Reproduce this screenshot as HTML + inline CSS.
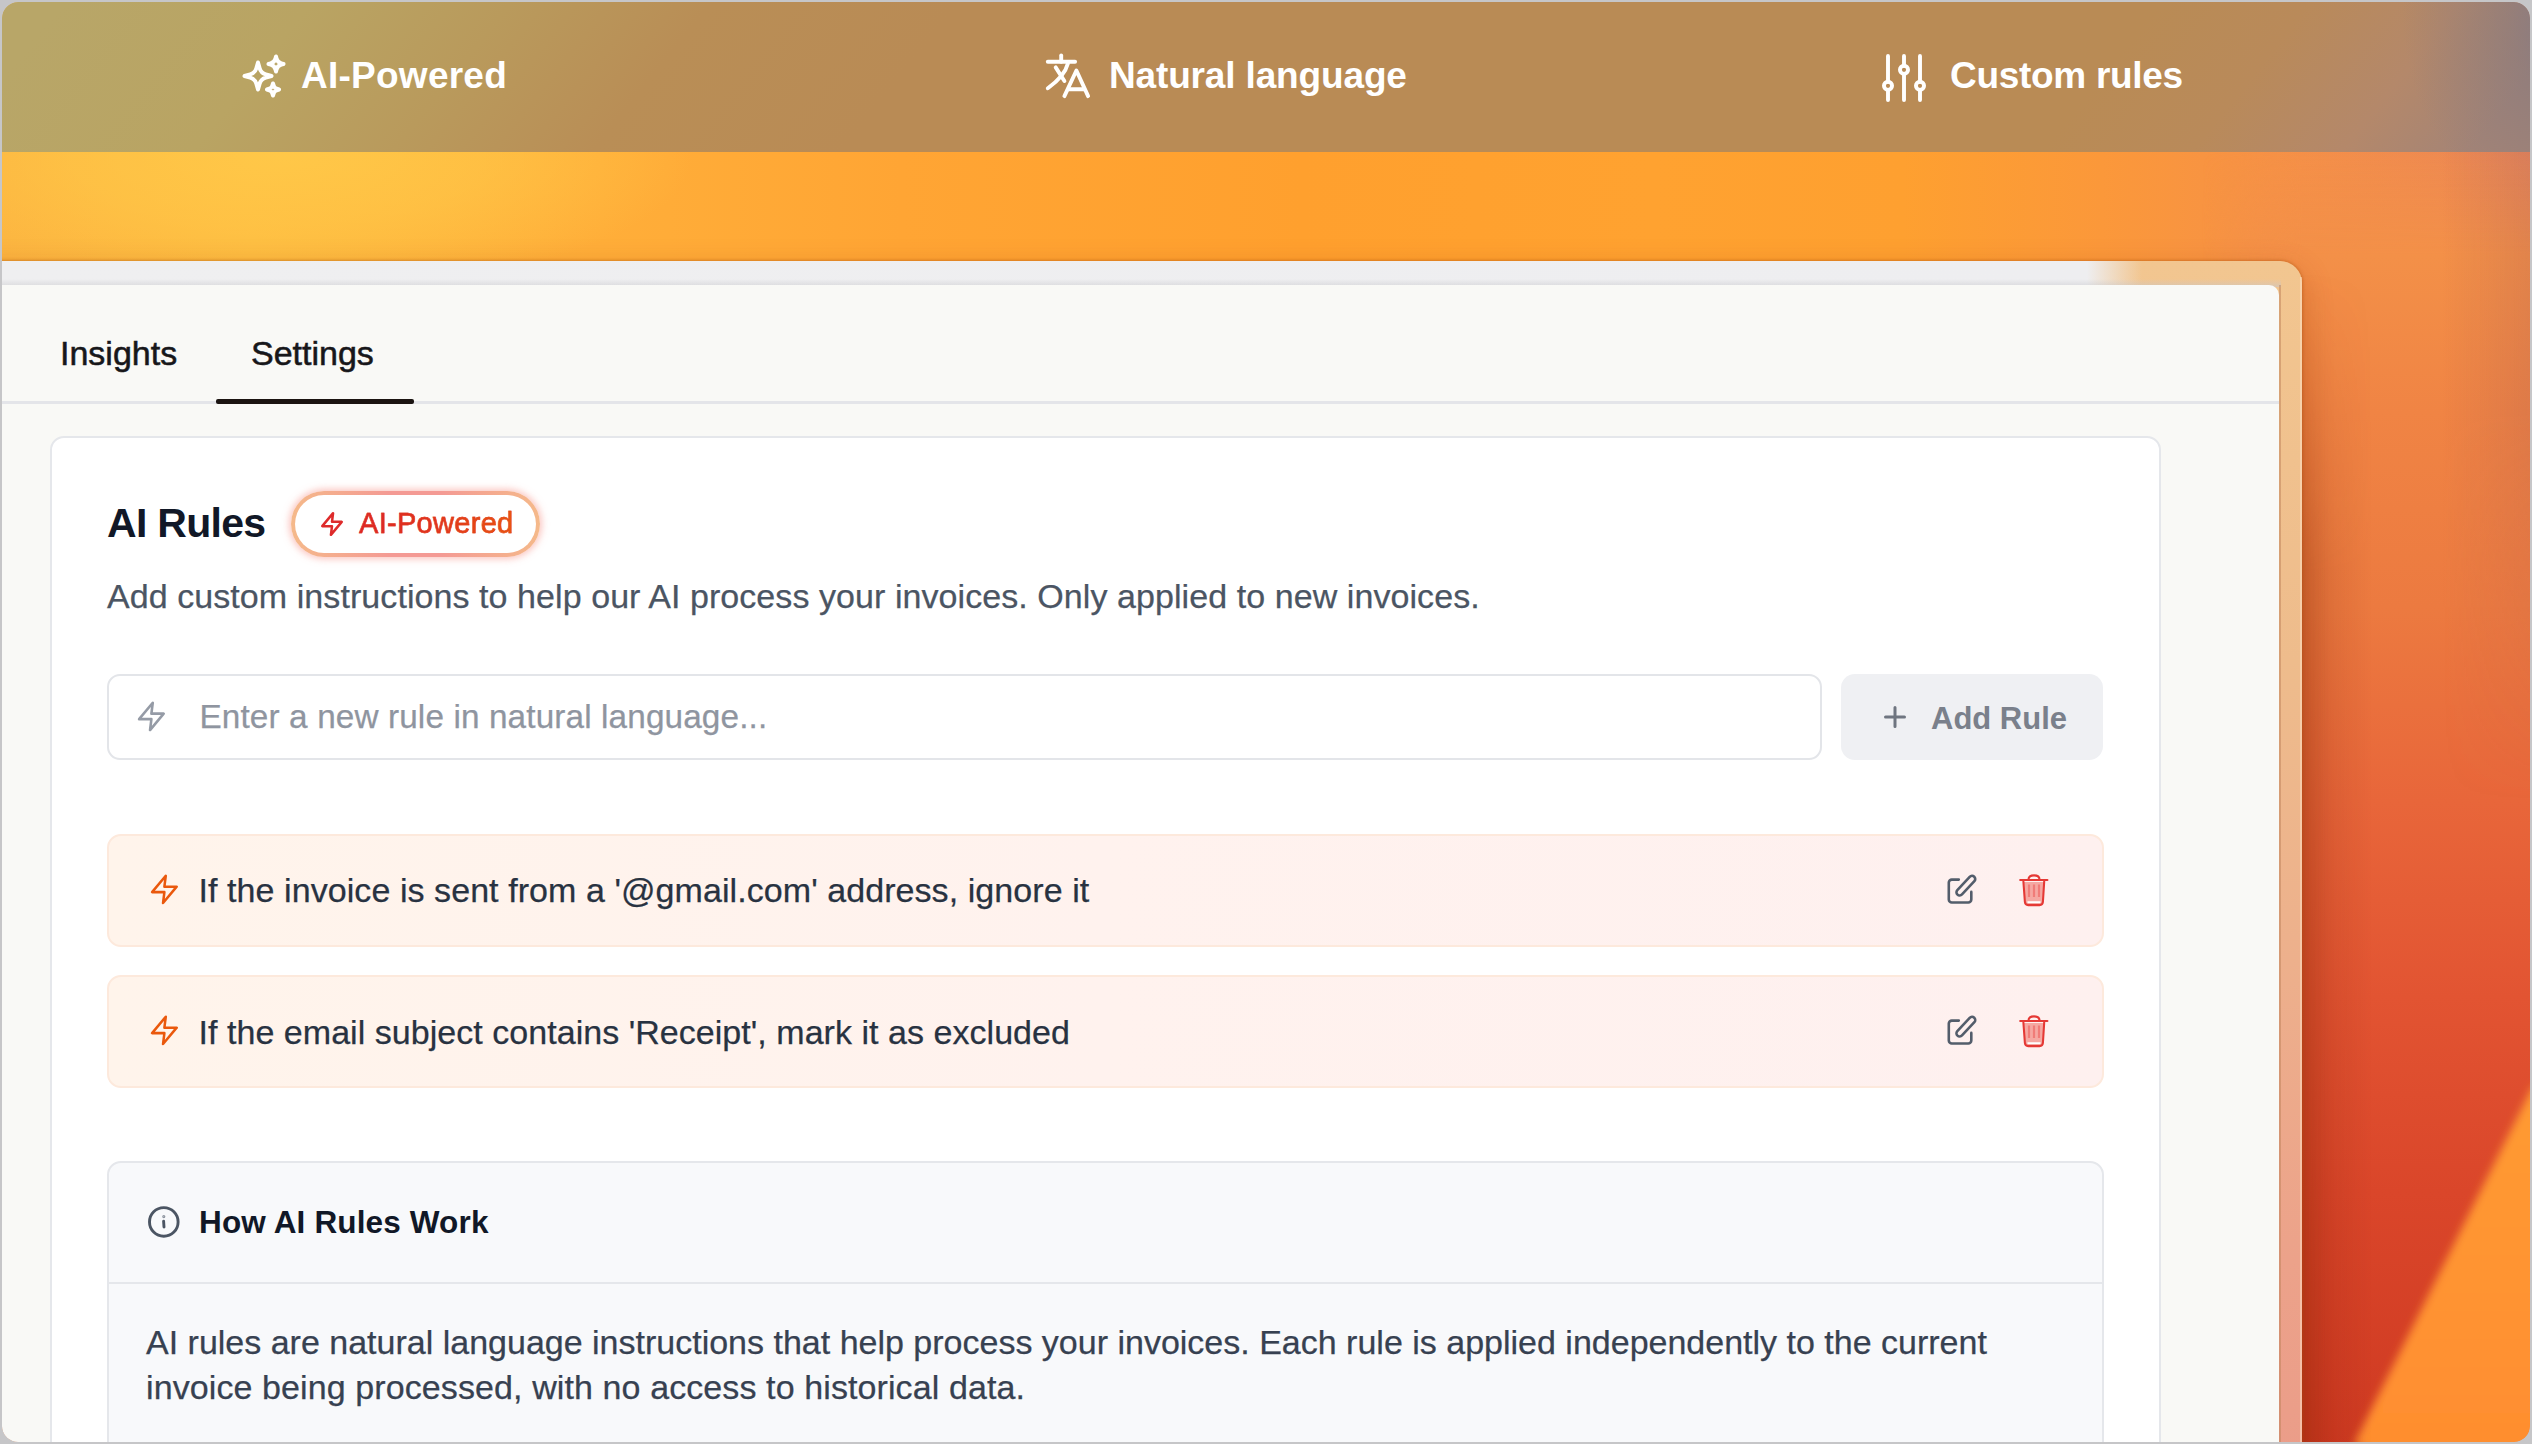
<!DOCTYPE html>
<html>
<head>
<meta charset="utf-8">
<style>
html,body{margin:0;padding:0;}
body{width:2532px;height:1444px;overflow:hidden;background:#c6c6c8;position:relative;font-family:"Liberation Sans",sans-serif;}
.abs{position:absolute;}
#shell{position:absolute;left:2px;top:2px;width:2528px;height:1440px;border-radius:16px;overflow:hidden;
  background:linear-gradient(90deg,#fcb440 0px,#feb93f 250px,#ffae39 600px,#ffa534 900px,#ffa02e 1300px,#ffa230 1650px,#fea030 1900px,#fb983a 2100px,#f59048 2300px,#ee8a52 2450px,#e98a5c 2528px);}
#blob{left:-130px;top:20px;width:820px;height:270px;background:radial-gradient(closest-side,rgba(255,200,72,.95),rgba(255,200,72,.6) 50%,rgba(255,200,72,0));}
#rightbg{left:2250px;top:150px;width:290px;height:1300px;
  background:linear-gradient(180deg,rgba(243,144,72,0) 0px,#f39048 110px,#f08444 260px,#ec7a40 420px,#e8693a 600px,#e3563330 0px);}
#topbar{left:0;top:0;width:2528px;height:150px;
  background:linear-gradient(128.7deg,#b8a668 47px,#b9a463 242px,#b99a5c 398px,#b98e56 554px,#b98b55 749px,#b98b55 1685px,#b98a5a 1802px,#b4886a 1919px,#a48476 2019px);}
.tbt{position:absolute;color:#fff;font-weight:700;font-size:37px;line-height:37px;white-space:nowrap;letter-spacing:-0.3px;}
.t{position:absolute;white-space:nowrap;}
</style>
</head>
<body>
<div id="shell">
  <!-- background field -->
  <div class="abs" id="blob"></div>
  <svg class="abs" style="left:2200px;top:150px;-webkit-mask-image:linear-gradient(90deg,transparent 0,#000 100px);mask-image:linear-gradient(90deg,transparent 0,#000 100px);" width="340" height="1300" viewBox="0 0 340 1300">
    <defs>
      <linearGradient id="rg" x1="0" y1="0" x2="0" y2="1">
        <stop offset="0" stop-color="#f39048" stop-opacity="0"/>
        <stop offset="0.08" stop-color="#f39048"/>
        <stop offset="0.2" stop-color="#f08444"/>
        <stop offset="0.35" stop-color="#ec7a40"/>
        <stop offset="0.5" stop-color="#e8663a"/>
        <stop offset="0.65" stop-color="#e25432"/>
        <stop offset="0.8" stop-color="#da462a"/>
        <stop offset="1" stop-color="#cf3a22"/>
      </linearGradient>
      <linearGradient id="wg" x1="0" y1="0" x2="0" y2="1">
        <stop offset="0" stop-color="#ff9c34"/>
        <stop offset="1" stop-color="#ff8a2e"/>
      </linearGradient>
      <filter id="blur4" x="-20%" y="-20%" width="140%" height="140%"><feGaussianBlur stdDeviation="4"/></filter>
    </defs>
    <rect x="0" y="0" width="340" height="1300" fill="url(#rg)"/>
    <polygon points="330,936 152,1292 400,1400 400,900" fill="url(#wg)" filter="url(#blur4)"/>
  </svg>
  <div class="abs" style="left:2440px;top:150px;width:100px;height:650px;background:linear-gradient(90deg,rgba(150,80,90,0) 0,rgba(150,80,90,.22) 100%);-webkit-mask-image:linear-gradient(180deg,#000 0,#000 40%,transparent 100%);mask-image:linear-gradient(180deg,#000 0,#000 40%,transparent 100%);"></div>
  <div class="abs" id="topbar"></div>
  <div class="abs" style="left:2050px;top:-200px;width:700px;height:420px;background:radial-gradient(closest-side at 75% 50%,rgba(120,118,138,.75) 0%,rgba(125,118,130,.45) 40%,rgba(140,120,120,0) 100%);clip-path:inset(200px 0 70px 0);"></div>

  <!-- window frame -->
  <div class="abs" style="left:2300px;top:270px;width:70px;height:1180px;background:linear-gradient(90deg,rgba(110,25,0,.26) 0,rgba(110,25,0,.1) 40%,rgba(110,25,0,0) 100%);-webkit-mask-image:linear-gradient(180deg,transparent 0,#000 300px);mask-image:linear-gradient(180deg,transparent 0,#000 300px);"></div>
  <div class="abs" style="left:-40px;top:259px;width:2340px;height:1300px;border-radius:22px;box-shadow:0 10px 30px 2px rgba(150,50,10,.24), 0 0 3px 1px rgba(170,80,10,.4);
     background:linear-gradient(180deg,#f2c690 0px,#eebc8c 400px,#edb08c 700px,#eca28a 1000px,#ea9a88 1300px);"></div>
  <div class="abs" style="left:-40px;top:259px;width:2200px;height:26px;border-top-left-radius:22px;background:linear-gradient(90deg,#efeff0 0,#eeeef0 2125px,rgba(236,236,238,0) 2180px);"></div>
  <div class="abs" style="left:-40px;top:277px;width:2319px;height:8px;background:linear-gradient(180deg,rgba(200,200,205,0) 0,rgba(200,200,205,.55) 100%);"></div>
  <div class="abs" style="left:2277px;top:283px;width:2px;height:1200px;background:rgba(190,130,90,.5);"></div>
  <div class="abs" style="left:2298px;top:275px;width:2px;height:1200px;background:rgba(255,225,200,.5);"></div>

  <!-- panel -->
  <div class="abs" id="panel" style="left:-2px;top:283px;width:2279px;height:1200px;background:#f9f9f6;border-top-right-radius:10px;overflow:hidden;">
  </div>
</div>

<!-- ===== top bar content ===== -->
<svg class="abs" style="left:240px;top:51.5px" width="48" height="48" viewBox="0 0 24 24" fill="none" stroke="#fff" stroke-width="2" stroke-linecap="round" stroke-linejoin="round">
  <path d="M9.813 15.904 9 18.75l-.813-2.846a4.5 4.5 0 0 0-3.09-3.09L2.25 12l2.846-.813a4.5 4.5 0 0 0 3.09-3.09L9 5.25l.813 2.846a4.5 4.5 0 0 0 3.09 3.09L15.75 12l-2.846.813a4.5 4.5 0 0 0-3.09 3.09ZM18.259 8.715 18 9.75l-.259-1.035a3.375 3.375 0 0 0-2.455-2.456L14.25 6l1.036-.259a3.375 3.375 0 0 0 2.455-2.456L18 2.25l.259 1.035a3.375 3.375 0 0 0 2.456 2.456L21.75 6l-1.035.259a3.375 3.375 0 0 0-2.456 2.456ZM16.894 20.567 16.5 21.75l-.394-1.183a2.25 2.25 0 0 0-1.423-1.423L13.5 18.75l1.183-.394a2.25 2.25 0 0 0 1.423-1.423l.394-1.183.394 1.183a2.25 2.25 0 0 0 1.423 1.423l1.183.394-1.183.394a2.25 2.25 0 0 0-1.423 1.423Z"/>
</svg>
<div class="tbt" style="left:301px;top:57px;letter-spacing:0.25px;">AI-Powered</div>
<svg class="abs" style="left:1040px;top:48px" width="56" height="56" viewBox="0 0 56 56" fill="none" stroke="#fff" stroke-width="3.9" stroke-linecap="round" stroke-linejoin="round">
  <path d="M7.8 13.7H35.1"/><path d="M21.2 7.4V13.7"/><path d="M27.9 15.5Q24.75 27.9 7.8 40.3"/><path d="M15.7 19.4L24.4 33"/><path d="M24.4 48.1L36.4 22.5L48.1 48.1"/><path d="M28.5 41.3H44"/>
</svg>
<div class="tbt" style="left:1109px;top:57px;letter-spacing:-0.15px;">Natural language</div>
<svg class="abs" style="left:1872px;top:50px" width="64" height="56" viewBox="0 0 64 56" fill="none" stroke="#fff" stroke-width="3.9" stroke-linecap="round">
  <path d="M16 5.95V31.75M16 39.85V50.05"/><circle cx="16" cy="35.8" r="4.05"/>
  <path d="M32 5.95V15.75M32 23.85V50.05"/><circle cx="32" cy="19.8" r="4.05"/>
  <path d="M48 5.95V31.75M48 39.85V50.05"/><circle cx="48" cy="35.8" r="4.05"/>
</svg>
<div class="tbt" style="left:1950px;top:57px;">Custom rules</div>

<!-- ===== tabs ===== -->
<div class="t" style="left:60px;top:336px;font-size:34px;line-height:34px;color:#17171a;-webkit-text-stroke:0.55px #17171a;">Insights</div>
<div class="t" style="left:251px;top:336px;font-size:34px;line-height:34px;color:#17171a;-webkit-text-stroke:0.55px #17171a;">Settings</div>
<div class="abs" style="left:0;top:401px;width:2279px;height:2.5px;background:#e4e5e9;"></div>
<div class="abs" style="left:216px;top:399px;width:198px;height:4.5px;background:#1b1411;border-radius:2px;"></div>

<!-- ===== card ===== -->
<div class="abs" style="left:50px;top:436px;width:2107px;height:1100px;border:2px solid #e5e7eb;border-radius:14px;background:#fff;"></div>

<div class="t" style="left:107px;top:502.5px;font-size:41px;line-height:41px;font-weight:700;color:#111827;letter-spacing:-0.7px;">AI Rules</div>

<!-- badge -->
<div class="abs" style="left:291px;top:491px;width:249px;height:66px;border-radius:33px;box-shadow:0 0 7px 2px rgba(248,150,140,.55);background:linear-gradient(90deg,#f5b98a,#f49a94 40%,#f49a94 60%,#f5b98a);"></div>
<div class="abs" style="left:295px;top:495px;width:241px;height:58px;border-radius:29px;background:#fff;"></div>
<svg class="abs" style="left:319.2px;top:511.2px" width="26" height="26" viewBox="0 0 24 24" fill="none" stroke="#de2b2b" stroke-width="2.3" stroke-linejoin="round" stroke-linecap="round">
  <polygon points="13 2 3 14 12 14 11 22 21 10 12 10 13 2"/>
</svg>
<div class="t" style="left:359px;top:508.5px;font-size:29px;line-height:29px;letter-spacing:0.3px;background:linear-gradient(90deg,#dc2626 0%,#e0321e 45%,#ea580c 100%);-webkit-background-clip:text;background-clip:text;color:transparent;-webkit-text-stroke:0.45px #e23c1c;">AI-Powered</div>

<div class="t" style="left:107px;top:578.7px;font-size:34px;line-height:34px;color:#4b5563;-webkit-text-stroke:0.25px #4b5563;letter-spacing:0.07px;">Add custom instructions to help our AI process your invoices. Only applied to new invoices.</div>

<!-- input -->
<div class="abs" style="left:107px;top:674px;width:1711px;height:82px;border:2px solid #e3e5e9;border-radius:13px;background:#fff;"></div>
<svg class="abs" style="left:135.2px;top:700px" width="32.8" height="32.8" viewBox="0 0 24 24" fill="none" stroke="#959ba6" stroke-width="1.9" stroke-linejoin="round" stroke-linecap="round" style="overflow:visible">
  <polygon points="13 2 3 14 12 14 11 22 21 10 12 10 13 2"/>
</svg>
<div class="t" style="left:199.5px;top:700px;font-size:33.3px;line-height:33.3px;color:#8f95a0;-webkit-text-stroke:0.25px #8f95a0;letter-spacing:0.13px;">Enter a new rule in natural language...</div>

<!-- add rule button -->
<div class="abs" style="left:1841px;top:674px;width:262px;height:86px;border-radius:14px;background:#eff0f3;"></div>
<svg class="abs" style="left:1883px;top:705px" width="24" height="24" viewBox="0 0 24 24" fill="none" stroke="#6f7580" stroke-width="3" stroke-linecap="round">
  <path d="M12 2.5v19M2.5 12h19"/>
</svg>
<div class="t" style="left:1931px;top:702.5px;font-size:31px;line-height:31px;font-weight:700;color:#7a808b;">Add Rule</div>

<!-- rules -->
<div class="abs" style="left:107px;top:834px;width:1993px;height:109px;border:2px solid #fde9dc;border-radius:14px;background:linear-gradient(90deg,#fff4eb 0%,#fff2ee 50%,#fef0ef 100%);"></div>
<svg class="abs" style="left:147.5px;top:872.8px" width="32.8" height="32.8" viewBox="0 0 24 24" fill="none" stroke="#ea580c" stroke-width="1.85" stroke-linejoin="round" stroke-linecap="round">
  <polygon points="13 2 3 14 12 14 11 22 21 10 12 10 13 2"/>
</svg>
<div class="t" style="left:198.5px;top:873.2px;font-size:34px;line-height:34px;color:#283241;-webkit-text-stroke:0.25px #283241;letter-spacing:0.07px;">If the invoice is sent from a '@gmail.com' address, ignore it</div>
<svg class="abs" style="left:1945px;top:872px" width="36" height="36" viewBox="0 0 36 36" fill="none" stroke="#535d6b" stroke-width="2.6" stroke-linecap="round" stroke-linejoin="round">
  <path d="M13.8 7.6H6.8a3 3 0 0 0-3 3V27.5a3 3 0 0 0 3 3H23.3a3 3 0 0 0 3-3V19.9"/><rect x="8.6" y="10.45" width="24.5" height="6.4" rx="3.2" transform="rotate(-46.9 20.85 13.65)"/>
</svg>
<svg class="abs" style="left:2018px;top:872px" width="32" height="36" viewBox="0 0 32 36" fill="none" stroke="#e53935" stroke-width="2.5" stroke-linecap="round" stroke-linejoin="round">
  <path d="M6 10L7.3 30Q7.6 32.6 10.2 32.6H21.6Q24.2 32.6 24.5 30L25.6 10z" fill="#f5a8a2" stroke="none"/>
  <path d="M11 12.5V25M16 12.5V25M21 12.5V25" stroke="#f07c78" stroke-width="2.2" stroke-linecap="butt"/>
  <path d="M2.2 8H29.4M10.5 7.6Q10.5 3.4 16 3.4T21.5 7.6M5.4 9.5L6.9 30Q7.2 33.1 10.2 33.1H21.6Q24.6 33.1 24.9 30L26.2 9.5" stroke-width="2.1"/>
  <path d="M10 30.1H22" stroke="#fff" stroke-width="1.6"/>
</svg>

<div class="abs" style="left:107px;top:975.4px;width:1993px;height:109px;border:2px solid #fde9dc;border-radius:14px;background:linear-gradient(90deg,#fff4eb 0%,#fff2ee 50%,#fef0ef 100%);"></div>
<svg class="abs" style="left:147.5px;top:1014.2px" width="32.8" height="32.8" viewBox="0 0 24 24" fill="none" stroke="#ea580c" stroke-width="1.85" stroke-linejoin="round" stroke-linecap="round">
  <polygon points="13 2 3 14 12 14 11 22 21 10 12 10 13 2"/>
</svg>
<div class="t" style="left:198.5px;top:1014.6px;font-size:34px;line-height:34px;color:#283241;-webkit-text-stroke:0.25px #283241;letter-spacing:0.04px;">If the email subject contains 'Receipt', mark it as excluded</div>
<svg class="abs" style="left:1945px;top:1013.4px" width="36" height="36" viewBox="0 0 36 36" fill="none" stroke="#535d6b" stroke-width="2.6" stroke-linecap="round" stroke-linejoin="round">
  <path d="M13.8 7.6H6.8a3 3 0 0 0-3 3V27.5a3 3 0 0 0 3 3H23.3a3 3 0 0 0 3-3V19.9"/><rect x="8.6" y="10.45" width="24.5" height="6.4" rx="3.2" transform="rotate(-46.9 20.85 13.65)"/>
</svg>
<svg class="abs" style="left:2018px;top:1013.4px" width="32" height="36" viewBox="0 0 32 36" fill="none" stroke="#e53935" stroke-width="2.5" stroke-linecap="round" stroke-linejoin="round">
  <path d="M6 10L7.3 30Q7.6 32.6 10.2 32.6H21.6Q24.2 32.6 24.5 30L25.6 10z" fill="#f5a8a2" stroke="none"/>
  <path d="M11 12.5V25M16 12.5V25M21 12.5V25" stroke="#f07c78" stroke-width="2.2" stroke-linecap="butt"/>
  <path d="M2.2 8H29.4M10.5 7.6Q10.5 3.4 16 3.4T21.5 7.6M5.4 9.5L6.9 30Q7.2 33.1 10.2 33.1H21.6Q24.6 33.1 24.9 30L26.2 9.5" stroke-width="2.1"/>
  <path d="M10 30.1H22" stroke="#fff" stroke-width="1.6"/>
</svg>

<!-- how box -->
<div class="abs" style="left:107px;top:1161px;width:1993px;height:400px;border:2px solid #e5e7eb;border-radius:14px;background:#f8f9fb;"></div>
<div class="abs" style="left:109px;top:1281.5px;width:1993px;height:2px;background:#e5e7eb;"></div>
<svg class="abs" style="left:147px;top:1206px" width="34" height="34" viewBox="0 0 34 34" fill="none" stroke="#4b5563" stroke-width="2.9" stroke-linecap="round">
  <circle cx="16.8" cy="15.9" r="14.3"/><path d="M16.6 15.2L17 21"/><circle cx="16.8" cy="10.6" r=".6" stroke="#8e95a0" stroke-width="2"/>
</svg>
<div class="t" style="left:199px;top:1206.6px;font-size:31.5px;line-height:31.5px;font-weight:700;color:#111827;letter-spacing:0.15px;">How AI Rules Work</div>
<div class="t" style="left:146px;top:1325px;font-size:34px;line-height:34px;color:#374151;-webkit-text-stroke:0.25px #374151;">AI rules are natural language instructions that help process your invoices. Each rule is applied independently to the current</div>
<div class="t" style="left:146px;top:1370.2px;font-size:34px;line-height:34px;color:#374151;-webkit-text-stroke:0.25px #374151;letter-spacing:0.1px;">invoice being processed, with no access to historical data.</div>

<!-- outer ring overlay -->
<div class="abs" style="left:2px;top:2px;width:2528px;height:1440px;border-radius:16px;box-shadow:0 0 0 30px #c6c6c8;pointer-events:none;"></div>

</body>
</html>
